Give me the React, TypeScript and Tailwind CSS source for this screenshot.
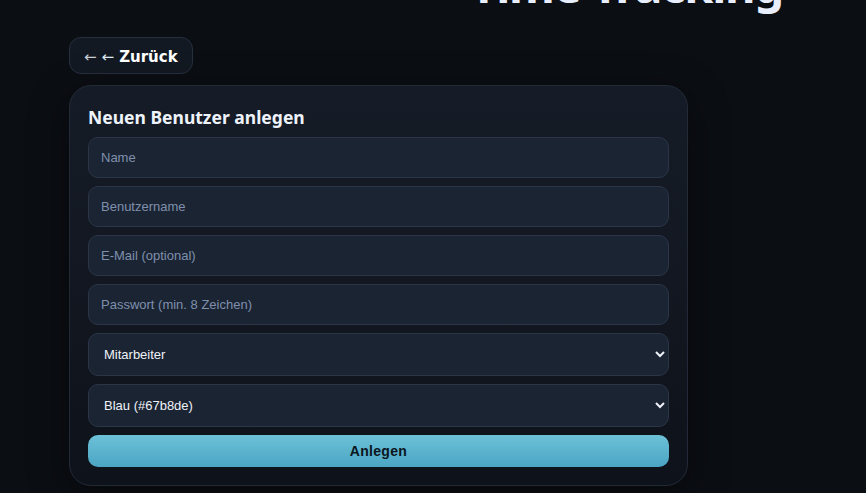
import { useState } from "react";

const fieldCls =
  "w-full h-[41px] rounded-[10px] border border-[#2b3547] bg-[#1b2433] px-3 text-[13px] text-[#e6ecf5] placeholder:text-[#7f90ad] outline-none";

const selectCls =
  "w-full h-[43px] rounded-[10px] border border-[#2b3547] bg-[#1b2433] pl-[11px] pr-2 text-[13px] text-[#eef2f8] outline-none";

export default function App() {
  const [role, setRole] = useState("mitarbeiter");
  const [color, setColor] = useState("#67b8de");

  return (
    <div className="min-h-screen w-full bg-[#0b0e13] overflow-hidden font-['Liberation_Sans',Arial,sans-serif]">
      <div className="flex justify-end pr-[83px] h-[10px]">
        <h1 className="-mt-[41px] text-[47px] leading-[52px] font-bold text-[#e8eefc] font-['Noto_Sans',sans-serif] tracking-tight">
          Time Tracking
        </h1>
      </div>

      <div className="ml-[69px] w-[619px] pt-[27px]">
        {/* Back */}
        <button className="h-[37px] rounded-xl border border-[#283040] bg-[#131922] px-[14px] pt-[3px] text-[15px] font-bold text-white font-['DejaVu_Sans',sans-serif] flex items-center">
          <span className="text-[#c9ced6] font-normal">←</span>
          <span className="ml-[5px] text-[#dfe9f5] font-normal">←</span>
          <span className="ml-[5px]">Zurück</span>
        </button>

        {/* Card */}
        <div className="mt-[11px] rounded-[22px] border border-[#222a37] bg-gradient-to-b from-[#161c27] to-[#0e121a] px-[18px] pt-[18px] pb-[18px] shadow-[0_10px_40px_rgba(0,0,0,0.45)]">
          <h2 className="text-[17.5px] leading-[27px] font-bold text-[#eef3fb] font-['Noto_Sans',sans-serif] mb-[6px]">
            Neuen Benutzer anlegen
          </h2>

          <form className="flex flex-col gap-2" onSubmit={(e) => e.preventDefault()}>
            <input className={fieldCls} placeholder="Name" />
            <input className={fieldCls} placeholder="Benutzername" />
            <input className={fieldCls} placeholder="E-Mail (optional)" />
            <input className={fieldCls} type="password" placeholder="Passwort (min. 8 Zeichen)" />

            <select className={selectCls} value={role} onChange={(e) => setRole(e.target.value)}>
              <option value="mitarbeiter">Mitarbeiter</option>
              <option value="admin">Administrator</option>
            </select>

            <select className={selectCls} value={color} onChange={(e) => setColor(e.target.value)}>
              <option value="#67b8de">Blau (#67b8de)</option>
              <option value="#7bd389">Grün (#7bd389)</option>
              <option value="#f2a65a">Orange (#f2a65a)</option>
            </select>

            <button
              type="submit"
              className="h-[32px] rounded-[10px] bg-gradient-to-b from-[#6cc1d7] to-[#4aa5c4] text-[14px] font-bold text-[#0b1520] tracking-[0.3px]"
            >
              Anlegen
            </button>
          </form>
        </div>
      </div>
    </div>
  );
}
